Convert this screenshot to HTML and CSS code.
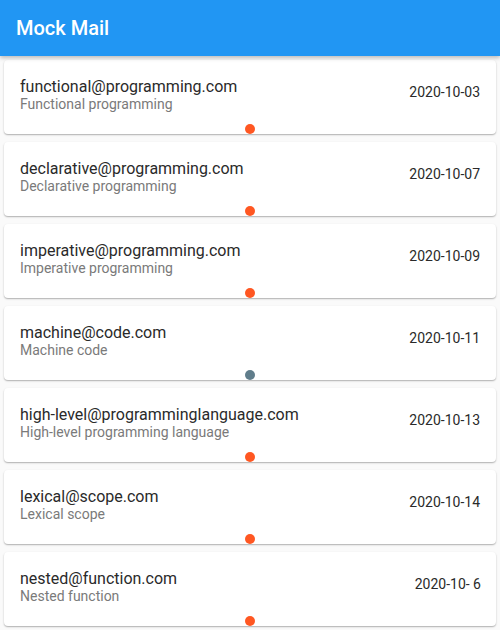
FILE: index.html
```html
<!DOCTYPE html>
<html>
<head>
<meta charset="utf-8">
<link rel="stylesheet" href="styles.css">
</head>
<body>
<header class="appbar"><span class="title">Mock Mail</span></header>
<main class="list">
  <div class="card">
    <div class="row">
      <div class="texts"><div class="email">functional@programming.com</div><div class="subject">Functional programming</div></div>
      <div class="date">2020-10-03</div>
    </div>
    <div class="dot unread"></div>
  </div>
  <div class="card">
    <div class="row">
      <div class="texts"><div class="email">declarative@programming.com</div><div class="subject">Declarative programming</div></div>
      <div class="date">2020-10-07</div>
    </div>
    <div class="dot unread"></div>
  </div>
  <div class="card">
    <div class="row">
      <div class="texts"><div class="email">imperative@programming.com</div><div class="subject">Imperative programming</div></div>
      <div class="date">2020-10-09</div>
    </div>
    <div class="dot unread"></div>
  </div>
  <div class="card">
    <div class="row">
      <div class="texts"><div class="email">machine@code.com</div><div class="subject">Machine code</div></div>
      <div class="date">2020-10-11</div>
    </div>
    <div class="dot read"></div>
  </div>
  <div class="card">
    <div class="row">
      <div class="texts"><div class="email">high-level@programminglanguage.com</div><div class="subject">High-level programming language</div></div>
      <div class="date">2020-10-13</div>
    </div>
    <div class="dot unread"></div>
  </div>
  <div class="card">
    <div class="row">
      <div class="texts"><div class="email">lexical@scope.com</div><div class="subject">Lexical scope</div></div>
      <div class="date">2020-10-14</div>
    </div>
    <div class="dot unread"></div>
  </div>
  <div class="card">
    <div class="row">
      <div class="texts"><div class="email">nested@function.com</div><div class="subject">Nested function</div></div>
      <div class="date last">2020-10- 6</div>
    </div>
    <div class="dot unread"></div>
  </div>
</main>
</body>
</html>
```
FILE: styles.css
```css
html, body {
  margin: 0;
  padding: 0;
  height: 630px;
  overflow: hidden;
  background: #fafafa;
  font-family: Roboto, "Liberation Sans", sans-serif;
}
.appbar {
  height: 56px;
  background: #2196f3;
  display: flex;
  align-items: center;
  padding: 0 16px;
  box-shadow: 0 2px 4px rgba(0,0,0,0.25);
  position: relative;
  z-index: 1;
}
.title {
  color: #fff;
  font-size: 20px;
  font-weight: 500;
}
.list {
  padding: 0;
  display: flex;
  flex-direction: column;
}
.card {
  margin: 4px;
  height: 74px;
  box-sizing: border-box;
  background: #fff;
  border-radius: 4px;
  box-shadow: 0 1px 2px rgba(0,0,0,0.22), 0 1px 1px rgba(0,0,0,0.1);
  padding: 17px 16px 0 16px;
  display: flex;
  flex-direction: column;
}
.row {
  display: flex;
  align-items: center;
  justify-content: space-between;
}
.email {
  font-size: 16px;
  line-height: 19px;
  color: #2a2a2a;
}
.subject {
  font-size: 14px;
  line-height: 17px;
  color: #7a7a7a;
}
.date {
  font-size: 14px;
  color: #2a2a2a;
  margin-top: -6px;
}
.date.last {
  white-space: pre;
  margin-right: -1px;
}
.dot {
  width: 10px;
  height: 10px;
  border-radius: 50%;
  align-self: center;
  margin-top: 11px;
}
.dot.unread { background: #ff5722; }
.dot.read { background: #607d8b; }
```
